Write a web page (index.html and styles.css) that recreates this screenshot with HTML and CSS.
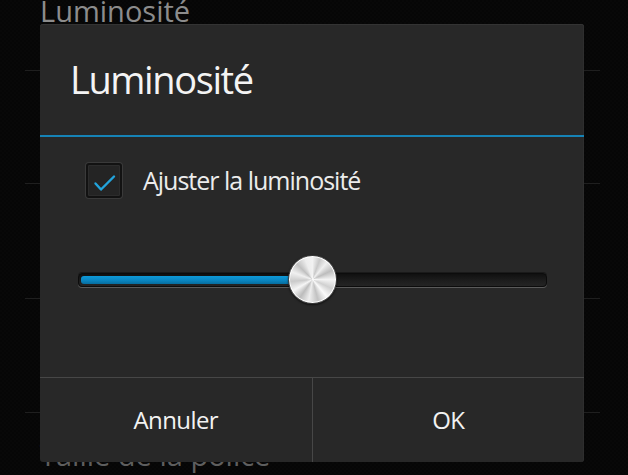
FILE: index.html
```html
<!DOCTYPE html>
<html lang="fr">
<head>
<meta charset="utf-8">
<title>Luminosité</title>
<link rel="stylesheet" href="styles.css">
</head>
<body>
<div class="screen">
  <ul class="list">
    <li class="row row-1"><span class="row-title row-title-first">Luminosité</span></li>
    <li class="row row-2"></li>
    <li class="row row-3"></li>
    <li class="row row-4"></li>
    <li class="row row-5"><span class="row-title row-title-last">Taille de la police</span></li>
  </ul>

  <div class="dialog">
    <div class="dialog-title">Luminosité</div>
    <div class="dialog-body">
      <label class="check-row">
        <span class="checkbox">
          <svg class="checkmark" width="36" height="35" viewBox="0 0 36 35">
            <polyline points="9.5,20.5 15,26.5 28,13.5" fill="none" stroke="#22a4dc" stroke-width="2.4" stroke-linecap="round" stroke-linejoin="round"/>
          </svg>
        </span>
        <span class="check-label">Ajuster la luminosité</span>
      </label>
      <div class="slider">
        <div class="track">
          <div class="fill" style="width: 50.1%"></div>
        </div>
        <div class="thumb" style="left: 50.1%"></div>
      </div>
    </div>
    <div class="dialog-buttons">
      <div class="btn">Annuler</div>
      <div class="btn btn-right">OK</div>
    </div>
  </div>
</div>
</body>
</html>
```

FILE: styles.css
```css
* { box-sizing: border-box; }

html, body {
  margin: 0;
  padding: 0;
  background: #060606;
}

body {
  font-family: "Open Sans", "DejaVu Sans", sans-serif;
}

.screen {
  position: relative;
  width: 628px;
  height: 475px;
  overflow: hidden;
  background-color: #060606;
  background-image:
    linear-gradient(45deg, #080808 25%, transparent 25%, transparent 75%, #080808 75%),
    linear-gradient(45deg, #080808 25%, transparent 25%, transparent 75%, #080808 75%);
  background-size: 4px 4px;
  background-position: 0 0, 2px 2px;
}

/* settings list behind the dialog */
.list {
  list-style: none;
  margin: 0;
  padding: 0 0 0 25px;
  width: 600px;
  display: flow-root;
}

.row {
  display: flow-root;
  border-bottom: 1px solid #1f1f1f;
  padding-left: 15px;
}

.row-1 { height: 71px; }
.row-2 { height: 113px; }
.row-3 { height: 115px; }
.row-4 { height: 114px; }
.row-5 { border-bottom: none; padding-top: 27px; }

.row-title {
  display: block;
  font-size: 29px;
  line-height: 29px;
  white-space: nowrap;
}

.row-title-first {
  margin-top: -4px;
  color: #8c8c8c;
}

.row-title-last {
  color: #5e5e5e;
}

/* dialog */
.dialog {
  position: absolute;
  left: 40px;
  top: 24px;
  width: 544px;
  height: 438px;
  background: #282828;
  border-radius: 3px;
  display: flex;
  flex-direction: column;
  box-shadow: inset 0 1px 0 #333333, inset -1px 0 0 #2e2e2e;
}

.dialog-title {
  height: 113px;
  padding: 36px 0 0 30px;
  font-size: 38px;
  line-height: 38px;
  letter-spacing: -1.4px;
  color: #f4f4f4;
  border-bottom: 2px solid #1683b6;
}

.dialog-body {
  flex: 1;
  padding-top: 26px;
  display: flex;
  flex-direction: column;
}

.check-row {
  display: flex;
  align-items: center;
  padding-left: 46px;
  gap: 21px;
}

.checkbox {
  width: 36px;
  height: 35px;
  border: 2px solid #121212;
  border-radius: 3px;
  background: #242424;
  box-shadow: 0 0 0 1px #3a3a3a, inset 0 0 0 1px #2c2c2c;
  position: relative;
}

.checkmark {
  position: absolute;
  left: -2px;
  top: -2px;
}

.check-label {
  font-size: 25px;
  line-height: 25px;
  letter-spacing: -1px;
  color: #ececec;
}

.slider {
  position: relative;
  margin: 57px 0 0 38px;
  width: 469px;
  height: 49px;
  display: flex;
  align-items: center;
}

.track {
  width: 100%;
  height: 14px;
  border-radius: 4px;
  background: linear-gradient(#101010, #1e1e1e 60%, #242424);
  border: 1px solid #0c0c0c;
  box-shadow: 0 1px 0 #5a5a5a, 0 -1px 0 #1a1a1a;
  overflow: hidden;
  padding: 2px;
}

.fill {
  height: 100%;
  border-radius: 3px;
  background: linear-gradient(#0e9ad8, #0a88c4 50%, #076d9e);
}

.thumb {
  position: absolute;
  top: 0;
  width: 49px;
  height: 49px;
  margin-left: -24.5px;
  border-radius: 50%;
  border: 1px solid #3c3c3c;
  background:
    radial-gradient(circle, rgba(255,255,255,0.5) 0, rgba(255,255,255,0) 6px),
    conic-gradient(from 0deg,
      #f2f2f2 0deg, #c8c8c8 20deg, #efefef 40deg, #bdbdbd 65deg, #f4f4f4 90deg,
      #d0d0d0 115deg, #fafafa 140deg, #c2c2c2 165deg, #eeeeee 190deg,
      #bcbcbc 215deg, #f6f6f6 240deg, #cacaca 265deg, #f0f0f0 290deg,
      #c0c0c0 315deg, #ededed 340deg, #f2f2f2 360deg);
  box-shadow: inset 0 0 0 1px #ffffff, 0 1px 2px rgba(0,0,0,0.6);
}

.dialog-buttons {
  height: 85px;
  border-top: 1px solid #474747;
  display: flex;
}

.btn {
  flex: 1 1 0;
  display: flex;
  align-items: center;
  justify-content: center;
  font-size: 24px;
  line-height: 24px;
  letter-spacing: -0.6px;
  color: #f2f2f2;
}

.btn-right {
  border-left: 1px solid #474747;
}
```
